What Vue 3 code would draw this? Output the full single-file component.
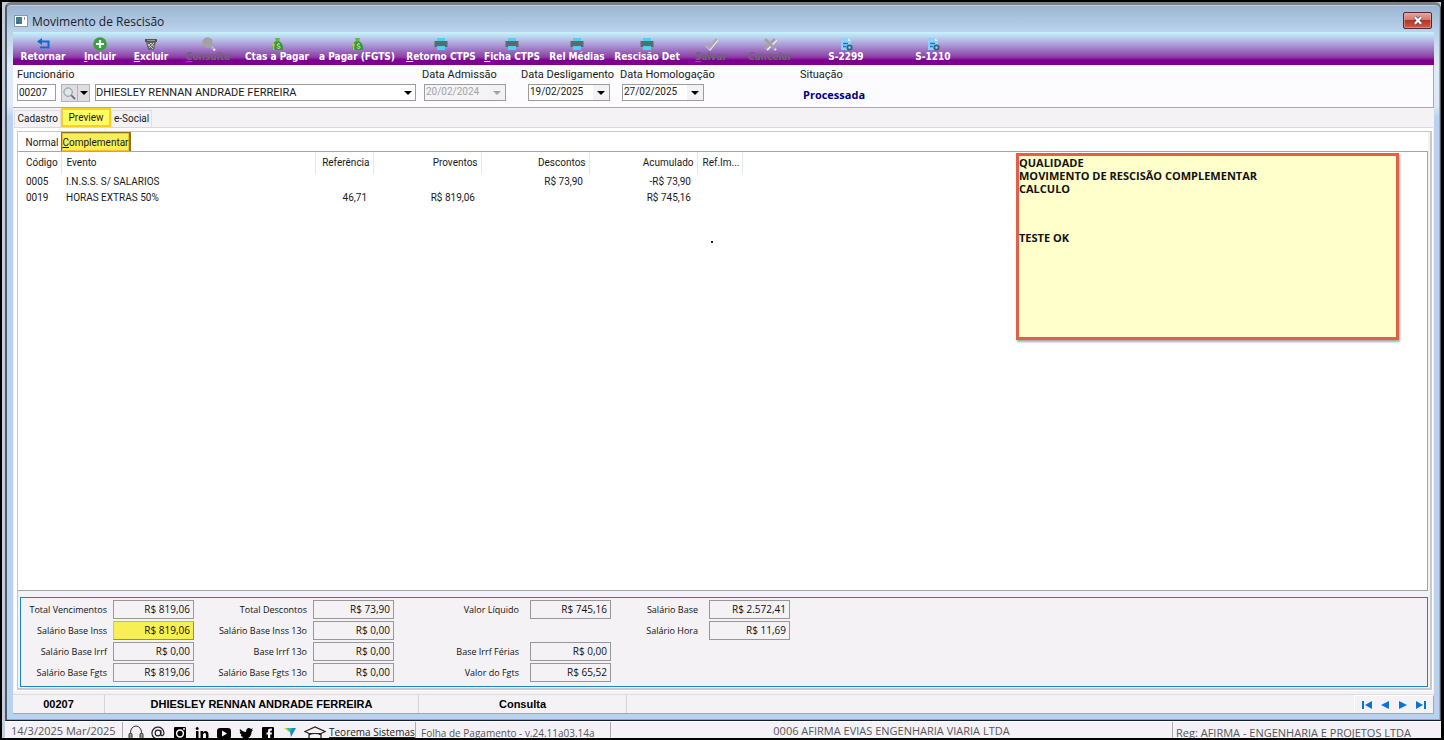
<script setup>
const tools = [
  { key: 'R', rest: 'etornar', icon: 'back', w: 'w60' },
  { key: 'I', rest: 'ncluir', icon: 'add', w: 'w54', u: true },
  { key: 'E', rest: 'xcluir', icon: 'trash', w: 'w48', u: true },
  { key: 'C', rest: 'onsulta', icon: 'search', w: 'w66', u: true, disabled: true },
  { key: 'C', rest: 'tas a Pagar', icon: 'money', w: 'w72' },
  { key: 'a', rest: ' Pagar (FGTS)', icon: 'money', w: 'w88' },
  { key: 'R', rest: 'etorno CTPS', icon: 'print', w: 'w80', u: true },
  { key: 'F', rest: 'icha CTPS', icon: 'print', w: 'w62', u: true },
  { key: 'R', rest: 'el Médias', icon: 'print', w: 'w68' },
  { key: 'R', rest: 'escisão Det', icon: 'print', w: 'w72' },
  { key: 'S', rest: 'alvar', icon: 'check', w: 'w56', u: true, disabled: true },
  { key: 'C', rest: 'ancelar', icon: 'cross', w: 'w62', disabled: true },
  { key: 'S', rest: '-2299', icon: 'doc', w: 'w90' },
  { key: 'S', rest: '-1210', icon: 'doc', w: 'w84' },
]

const rows = [
  { cod: '0005', evento: 'I.N.S.S. S/ SALARIOS', ref: '', prov: '', desc: 'R$ 73,90', acum: '-R$ 73,90' },
  { cod: '0019', evento: 'HORAS EXTRAS 50%', ref: '46,71', prov: 'R$ 819,06', desc: '', acum: 'R$ 745,16' },
]

const groups = [
  {
    cls: 'g1',
    items: [
      { id: 'tv', label: 'Total Vencimentos', value: 'R$ 819,06' },
      { id: 'sbi', label: 'Salário Base Inss', value: 'R$ 819,06', mark: true },
      { id: 'sbr', label: 'Salário Base Irrf', value: 'R$ 0,00' },
      { id: 'sbf', label: 'Salário Base Fgts', value: 'R$ 819,06' },
    ],
  },
  {
    cls: 'g2',
    items: [
      { id: 'td', label: 'Total Descontos', value: 'R$ 73,90' },
      { id: 'sbi13', label: 'Salário Base Inss 13o', value: 'R$ 0,00' },
      { id: 'bi13', label: 'Base Irrf 13o', value: 'R$ 0,00' },
      { id: 'sbf13', label: 'Salário Base Fgts 13o', value: 'R$ 0,00' },
    ],
  },
  {
    cls: 'g3',
    items: [
      { id: 'vl', label: 'Valor Líquido', value: 'R$ 745,16' },
      { id: 'blank' },
      { id: 'bif', label: 'Base Irrf Férias', value: 'R$ 0,00' },
      { id: 'vf', label: 'Valor do Fgts', value: 'R$ 65,52' },
    ],
  },
  {
    cls: 'g4',
    items: [
      { id: 'sb', label: 'Salário Base', value: 'R$ 2.572,41' },
      { id: 'sh', label: 'Salário Hora', value: 'R$ 11,69' },
    ],
  },
]
</script>

<template>
  <div class="desktop">
    <section class="window">
      <header class="title">
        <svg class="appicon" viewBox="0 0 14 12"><rect x=".5" y=".5" width="13" height="11" fill="#fff" stroke="#8a97a8" /><rect x="2" y="2" width="6" height="7" fill="#3d7f8f" /><path d="M2 9h3V5z" fill="#3b62b0" /><path d="M10.500 2v3" stroke="#99a" /></svg>
        <h1>Movimento de Rescisão</h1>
        <button class="close" aria-label="Fechar">
          <svg viewBox="0 0 12 10"><path d="M2.500 1.500 9.500 8.500M9.500 1.500 2.500 8.500" stroke="#4a4f66" stroke-width="4" /><path d="M2.500 1.500 9.500 8.500M9.500 1.500 2.500 8.500" stroke="#fff" stroke-width="2.400" /></svg>
        </button>
      </header>

      <div class="client">
        <nav class="toolbar">
          <button v-for="t in tools" :key="t.key + t.rest" :class="t.w" :disabled="t.disabled">
            <svg viewBox="0 0 16 14">
              <g v-if="t.icon === 'back'" fill="none" stroke="#1268c8" stroke-width="2"><path d="M5 4.500h8.500v6H5" /><path d="M7 1v7L2 4.500z" fill="#1268c8" stroke="none" /><path d="M5 12h7" stroke="#4b9be8" stroke-width="1" /></g>
              <g v-else-if="t.icon === 'add'"><circle cx="8" cy="7" r="6.800" fill="#35a23a" /><path d="M8 3v8M4 7h8" stroke="#fff" stroke-width="2.200" /></g>
              <g v-else-if="t.icon === 'trash'"><path d="M2 2h12v3H2z" fill="#555" /><path d="M3 5h10l-2 8H5z" fill="#666" /><path d="M4 3.500h8" stroke="#aaa" stroke-width=".8" /><path d="M5 7l5 5M8 6l3 4M11 6l-5 5M8 6 5 9" stroke="#ddd" stroke-width=".8" /></g>
              <g v-else-if="t.icon === 'search'"><path d="m11 9.500 4 4" stroke="#f2eef6" stroke-width="2" /><circle cx="7.500" cy="5.500" r="5.300" fill="#a2a2a6" /><path d="m10 9 3 3.500" stroke="#a2a2a6" stroke-width="2.400" /></g>
              <g v-else-if="t.icon === 'money'"><path d="M7 4h3c3 1.500 4.500 5 4 9H3.500C3 9 4 5.500 7 4z" fill="#37983a" /><path d="M6 1h5l-1 3.500H7z" fill="#67b83f" /><path d="M11 7.500C9.500 6 7.500 7 8.500 8.500s3 .5 2.500 2-2.500 1-3 0" fill="none" stroke="#e4f3c4" /><path d="M4.500 6v7M3 8h3" stroke="#c9c43a" stroke-width="1.400" /></g>
              <g v-else-if="t.icon === 'print'"><path d="M4 1h8v4H4z" fill="#46d4f5" /><path d="M1.500 4h13v6h-13z" fill="#5d6874" /><path d="M4 9h8v4H4z" fill="#46d4f5" /></g>
              <g v-else-if="t.icon === 'check'" fill="none"><path d="m3 8.500 4 4 7.500-9.500" stroke="#f2eef6" stroke-width="2" /><path d="m2 7 4.500 4L13.500 2" stroke="#a9a9ad" stroke-width="2.600" /></g>
              <g v-else-if="t.icon === 'cross'" fill="none"><path d="m4 3 10 10M14.500 3 5 13" stroke="#f2eef6" stroke-width="2" /><path d="m3 2 10 10M13 2 3 12" stroke="#a2a2a6" stroke-width="3" /></g>
              <g v-else><path d="M3 1h7l3 3v9H3z" fill="#8fd0f8" /><path d="M10 1v3h3z" fill="#d9f1ff" /><path d="M5 6.500h5M5 9.500h3" stroke="#1673cf" stroke-width="1.600" /><circle cx="11.500" cy="10.500" r="2.200" fill="none" stroke="#35607c" stroke-width="1.800" /></g>
            </svg>
            <span><u v-if="t.u">{{ t.key }}</u><template v-else>{{ t.key }}</template>{{ t.rest }}</span>
          </button>
        </nav>

        <form class="filters" @submit.prevent>
          <div class="field func">
            <label for="cod">Funcionário</label>
            <div class="line">
              <input id="cod" class="cod" value="00207" />
              <span class="split">
                <button class="lens" aria-label="Pesquisar"><svg viewBox="0 0 14 14" fill="none"><circle cx="5.500" cy="5.500" r="4.500" fill="#dbe9e8" stroke="#80898c" /><path d="m9 9 4 4" stroke="#666" stroke-width="1.800" /></svg></button>
                <button class="drop" aria-label="Opções"><i class="arrow"></i></button>
              </span>
              <span class="combo">
                <select aria-label="Nome do funcionário"><option>DHIESLEY RENNAN ANDRADE FERREIRA</option></select>
                <i class="arrow"></i>
              </span>
            </div>
          </div>
          <div class="field date">
            <label for="adm">Data Admissão</label>
            <span class="picker off"><input id="adm" value="20/02/2024" disabled /><button disabled aria-label="Abrir calendário"><i class="arrow"></i></button></span>
          </div>
          <div class="field date mid">
            <label for="des">Data Desligamento</label>
            <span class="picker"><input id="des" value="19/02/2025" /><button aria-label="Abrir calendário"><i class="arrow"></i></button></span>
          </div>
          <div class="field date last">
            <label for="hom">Data Homologação</label>
            <span class="picker"><input id="hom" value="27/02/2025" /><button aria-label="Abrir calendário"><i class="arrow"></i></button></span>
          </div>
          <div class="field">
            <span class="caption">Situação</span>
            <strong class="state">Processada</strong>
          </div>
        </form>

        <div class="tabs">
          <button class="tab">Cadastro</button>
          <button class="tab current">Preview</button>
          <button class="tab">e-Social</button>
        </div>

        <main class="page">
          <div class="inner">
            <div class="subtabs">
              <button class="sub">Normal</button>
              <button class="sub current"><u>C</u>omplementar</button>
            </div>
            <div class="list">
              <table>
                <colgroup><col class="c1" /><col class="c2" /><col class="c3" /><col class="c4" /><col class="c4" /><col class="c4" /><col class="c5" /></colgroup>
                <thead>
                  <tr><th>Código</th><th>Evento</th><th class="num">Referência</th><th class="num">Proventos</th><th class="num">Descontos</th><th class="num">Acumulado</th><th>Ref.Im...</th></tr>
                </thead>
                <tbody>
                  <tr v-for="r in rows" :key="r.cod">
                    <td>{{ r.cod }}</td><td>{{ r.evento }}</td><td class="num">{{ r.ref }}</td><td class="num">{{ r.prov }}</td><td class="num">{{ r.desc }}</td><td class="num">{{ r.acum }}</td><td></td>
                  </tr>
                </tbody>
              </table>
              <i class="speck"></i>
              <aside class="note">
                <p>QUALIDADE<br />MOVIMENTO DE RESCISÃO COMPLEMENTAR<br />CALCULO</p>
                <p>TESTE OK</p>
              </aside>
            </div>
            <div class="totals">
              <div v-for="g in groups" :key="g.cls" class="group" :class="g.cls">
                <template v-for="f in g.items" :key="f.id">
                  <template v-if="f.label">
                    <label :for="f.id">{{ f.label }}</label>
                    <input :id="f.id" :value="f.value" :class="{ mark: f.mark }" readonly />
                  </template>
                  <template v-else><span></span><span></span></template>
                </template>
              </div>
            </div>
          </div>
        </main>

        <footer class="status">
          <span class="s1">00207</span>
          <span class="s2">DHIESLEY RENNAN ANDRADE FERREIRA</span>
          <span class="s3">Consulta</span>
          <div class="nav">
            <button aria-label="Primeiro"><svg viewBox="0 0 12 10"><path d="M1 1h2v8H1zM11 1v8L4 5z" /></svg></button>
            <button aria-label="Anterior"><svg viewBox="0 0 12 10"><path d="M10 1v8L2 5z" /></svg></button>
            <button aria-label="Próximo"><svg viewBox="0 0 12 10"><path d="M2 1v8l8-4z" /></svg></button>
            <button aria-label="Último"><svg viewBox="0 0 12 10"><path d="M9 1h2v8H9zM1 1v8l7-4z" /></svg></button>
          </div>
        </footer>
      </div>
    </section>

    <footer class="appbar">
      <span class="today">14/3/2025 Mar/2025</span>
      <div class="links">
        <a href="#" aria-label="Suporte"><svg viewBox="0 0 16 16" fill="none" stroke="#333"><path d="M2.500 11V7.500a5.500 6.500 0 0 1 11 0V11" /><rect x="1" y="8" width="3" height="6" rx="1.500" fill="#999" /><rect x="12" y="8" width="3" height="6" rx="1.500" fill="#999" /></svg></a>
        <a href="#" aria-label="E-mail"><svg viewBox="0 0 16 16" fill="none" stroke="#222" stroke-width="1.200"><circle cx="8" cy="8" r="2.800" /><path d="M10.800 5v4.500c0 2 3.200 1.500 3.200-1.500a6 6 0 1 0-3 5.300" /></svg></a>
        <a href="#" aria-label="Instagram"><svg viewBox="0 0 16 16"><rect x="2" y="2" width="12" height="12" rx="1" /><circle cx="8" cy="8.500" r="3.400" fill="none" stroke="#fff" stroke-width="1.500" /><circle cx="12" cy="4" r="1" fill="#fff" /></svg></a>
        <a href="#" aria-label="LinkedIn"><svg viewBox="0 0 16 16"><path d="M2 6h2.500v9H2zM6.500 6H9v1.200c2-2.300 5.500-1.200 5.500 2V15H12v-5c0-3-3-2.500-3 0v5H6.500z" /><circle cx="3.200" cy="3.500" r="1.500" /></svg></a>
        <a href="#" aria-label="YouTube"><svg viewBox="0 0 16 16"><rect x="1" y="3" width="14" height="11" rx="3" /><path d="m6 5.500 5 3-5 3z" fill="#fff" /></svg></a>
        <a href="#" aria-label="Twitter"><svg viewBox="0 0 16 16"><path d="M2 4c2 2 4 3 6 3 0-4 3-5 5-3l2-.7-1.200 2 1.200-.3-1.400 1.700C13.500 13 7 16 1.500 13.300c2 0 3-.4 4-1.200C4 12 3 11 2.800 10h1.400C2.500 9.500 1.800 8 1.800 6.800l1.300.4C1.700 6 1.500 5 2 4z" /></svg></a>
        <a href="#" aria-label="Facebook"><svg viewBox="0 0 16 16"><rect x="2" y="2" width="12" height="12" rx="1" /><path d="M8 15V9.500H6.500V7.500H8V6c0-2 1.500-2.700 4-2.300v1.800c-1.300 0-1.800 0-1.800 1v1H12l-.3 2h-1.500V15z" fill="#fff" /></svg></a>
        <a href="#" aria-label="Teorema"><svg viewBox="0 0 16 16"><path d="M2 3h8l-3 4z" fill="#b5dc2c" /><path d="M5 3h9L9 12 8 7z" fill="#1e86d8" /><path d="M5 3h5L8 7z" fill="#2bc4a0" /></svg></a>
        <a href="#" class="cap" aria-label="Treinamento"><svg viewBox="0 0 22 16" fill="none" stroke="#222" stroke-width="1.200"><path d="M1 6.500 11 2l10 4.500-4 2H5zM5 8.500V13c3 2 9 2 12 0V8.500M5 10c3-2 9-2 12 0" /></svg></a>
        <a href="#" class="site">Teorema Sistemas</a>
      </div>
      <span class="version">Folha de Pagamento - v.24.11a03.14a</span>
      <span class="company">0006 AFIRMA EVIAS ENGENHARIA VIARIA LTDA</span>
      <span class="reg">Reg: AFIRMA - ENGENHARIA E PROJETOS LTDA</span>
    </footer>
  </div>
</template>

<style>
body { margin: 0; background: #000; }
</style>

<style scoped>
* { box-sizing: border-box; }
button, input, select { font: inherit; color: inherit; margin: 0; padding: 0; border: 0; border-radius: 0; background: none; }
svg { display: block; }
.desktop {
  display: flex; flex-direction: column; height: 100vh; min-height: 480px;
  border: solid #000; border-width: 2px 3px 2px 2px; background: #c3cddb; padding-left: 3px;
  font: 10px/12px Roboto, "Liberation Sans", sans-serif; color: #1a1a1a;
}
.window {
  flex: 1; min-height: 0; display: flex; flex-direction: column;
  border: solid #4f5a67; border-width: 3px 1px 1px 2px; border-top-color: #7c7f85; border-bottom-color: #10202a; border-radius: 6px 6px 0 0;
  padding: 0 6px 6px; background: linear-gradient(#9ab4d2, #bad2ea 26px, #e0ebf8 60px, #dde9f7 100px, #bad2f0 112px);
  box-shadow: inset 0 -1px #4dc4dc, inset -1px 0 #6cc3d8, inset 0 1px #c3cfde;
}
.title { display: flex; align-items: center; height: 27px; padding: 7px 2px 0 1px; }
.appicon { width: 14px; height: 12px; margin-bottom: 3px; }
h1 { flex: 1; margin: 0 0 0 4px; font: 12px/16px "Open Sans", "Noto Sans", sans-serif; color: #1b222c; }
.close {
  width: 29px; height: 17px; margin-bottom: 4px; border: 1px solid #5b2434; border-radius: 2px; display: grid; place-items: center;
  background: linear-gradient(#e3a79f, #d2796e 45%, #b93024 50%, #cf5e47); box-shadow: inset 0 0 0 1px #e9b3aa80;
}
.close svg { width: 12px; height: 9px; }
.client { flex: 1; min-height: 0; display: flex; flex-direction: column; background: #f4f2f5; }

.toolbar {
  display: flex; height: 33px; flex: none; font: bold 10px/12px "DejaVu Sans Condensed", "Open Sans", sans-serif; color: #fff;
  background: linear-gradient(#c5f4fc, #bcd4ee 5px, #b0a8dc 11px, #a07cc6 17px, #8d3ea6 25px, #7e008f 28px, #7e008f);
}
.toolbar button { display: flex; flex-direction: column; align-items: center; padding-top: 5px; white-space: nowrap; }
.toolbar button:disabled { color: #6e6672; }
.toolbar svg { width: 16px; height: 14px; }
.w48 { width: 48px; } .w54 { width: 54px; } .w56 { width: 56px; } .w60 { width: 60px; } .w62 { width: 62px; }
.w66 { width: 66px; } .w68 { width: 68px; } .w72 { width: 72px; } .w80 { width: 80px; } .w84 { width: 84px; }
.w88 { width: 88px; } .w90 { width: 90px; }

.filters { display: flex; height: 43px; flex: none; padding: 3px 4px 0; background: #fcfbfe; border: solid #a9a9ad; border-width: 0 1px 1px 0; }
.field { display: flex; flex-direction: column; align-items: flex-start; }
.field label, .caption { font-size: 11px; line-height: 13px; white-space: nowrap; }
.func { width: 405px; }
.line { display: flex; margin-top: 3px; }
.cod { width: 39px; height: 17px; border: 1px solid #9c9ca0; background: #fff; padding-left: 1px; }
.split { display: flex; margin: 0 5px; height: 18px; border: 1px solid #b4b4b8; background: #dedde1; }
.lens { width: 16px; border-right: 1px solid #b4b4b8; display: grid; place-items: center; }
.lens svg { width: 13px; height: 13px; }
.drop { width: 11px; display: grid; place-items: center; }
.arrow { width: 0; height: 0; border: solid transparent; border-width: 4px 4px 0; border-top-color: #000; }
.combo { position: relative; width: 321px; height: 17px; }
.combo select { appearance: none; width: 100%; height: 17px; border: 1px solid #9c9ca0; background: #fff; font-size: 11px; line-height: 13px; padding-bottom: 1px; }
.combo .arrow { position: absolute; right: 4px; top: 7px; pointer-events: none; }
.date { width: 99px; }
.mid .picker { margin-left: 7px; }
.last { width: 180px; }
.picker { display: flex; margin: 3px 0 0 2px; width: 82px; height: 17px; border: 1px solid #9c9ca0; background: #fff; }
.picker input { width: 64px; padding: 0 0 1px 1px; }
.picker button { flex: 1; background: #f2f1f4; display: grid; place-items: center; }
.off { color: #a3a3a7; background: #f4f3f6; }
.off .arrow { border-top-color: #a3a3a7; }
.state { margin: 7px 0 0 3px; font: bold 11px/14px "Open Sans", "Noto Sans", sans-serif; color: #00007e; }

.tabs { display: flex; height: 19px; flex: none; padding-left: 1px; }
.tab { height: 17px; margin-top: 2px; padding: 0 2px; border: solid #e2e0e4; border-width: 1px 1px 0; }
.tab:first-child { width: 47px; padding: 0; text-align: right; padding-right: 2px; }
.tab.current { width: 50px; height: 19px; margin: 0; background: #ffff62; border: 2px solid #f8cf24; padding: 0; text-align: center; }

.page {
  flex: 1; min-height: 0; display: flex; flex-direction: column; margin: 0 1px 3px 1px; padding: 3px 1px 1px 3px;
  background: #fff; border-top: 1px solid #d9d8dc;
}
.inner {
  flex: 1; min-height: 0; display: flex; flex-direction: column; padding: 0 2px 1px 0; background: #f4f2f5;
  border: solid #c9c9cd; border-width: 1px 2px 2px 1px;
}
.subtabs { display: flex; height: 19px; flex: none; padding-left: 3px; background: #fff; }
.sub { width: 40px; height: 19px; padding: 3px 0 0 2px; }
.sub.current { width: 70px; padding: 2px 0 0; background: #f8ef55; border: solid #8a7418; border-width: 1px 2px 0 1px; box-shadow: inset 0 0 0 1px #f2c422; }
.list { position: relative; flex: 1; min-height: 0; background: #fff; border: solid #a4a4b0; border-width: 1px 1px 1px 0; }
table { width: 724px; border-collapse: collapse; table-layout: fixed; }
.c1 { width: 43px; } .c2 { width: 254px; } .c3 { width: 58px; } .c4 { width: 108px; } .c5 { width: 45px; }
th, td { height: 16px; padding: 0 6px 0 5px; font-weight: normal; text-align: left; white-space: nowrap; overflow: hidden; }
th { height: 22px; padding-right: 3px; border-right: 1px solid #e6e6ea; }
td:first-child, th:first-child { padding-left: 8px; padding-right: 0; }
.num { text-align: right; }
.speck { position: absolute; left: 693px; top: 89px; width: 2px; height: 2px; background: #222; }
.note {
  position: absolute; right: 28px; top: 1px; width: 383px; height: 187px; border: 3px solid #df604b;
  background: #ffffcc; box-shadow: 1px 2px 2px #0005; font: bold 11px/13px "Open Sans", "Noto Sans", sans-serif; color: #111;
}
.note p { margin: 0 0 36px; }

.totals { display: flex; gap: 6px; flex: none; margin: 6px 0 0 2px; padding: 2px 0 4px; border: 1px solid #1b84cf; }
.group { display: grid; grid-auto-rows: 19px; row-gap: 2px; column-gap: 6px; align-items: center; }
.group label { text-align: right; font: 9px/12px "Open Sans", "Noto Sans", sans-serif; color: #111; white-space: nowrap; }
.group input { height: 19px; width: 81px; border: 1px solid #98989c; background: #f4f2f5; text-align: right; padding: 0 3px 2px; font: 10px/12px "Open Sans", "Noto Sans", sans-serif; color: #111; }
.group input.mark { background: #f8ef55; border-color: #e0b52a #8f8f60 #8f8f60 #f2c422; }
.g1 { grid-template-columns: 86px 81px; }
.g2 { grid-template-columns: 107px 81px; }
.g3 { grid-template-columns: 124px 81px; }
.g4 { grid-template-columns: 86px 81px; align-content: start; }
.g3 label, .g4 label { padding-right: 5px; }

.status { display: flex; height: 20px; flex: none; border-bottom: 1px solid #a6a6aa; border-top: 1px solid #dddce0; font: bold 11px/18px "Liberation Sans", Arial, sans-serif; color: #000; }
.status span { text-align: center; border-right: 1px solid #d6d5d9; }
.s1 { width: 92px; } .s2 { width: 314px; } .s3 { width: 208px; }
.nav { display: flex; gap: 6px; margin-left: auto; padding: 0 6px; border: solid #fff; border-width: 1px 0 0 1px; border-right: 1px solid #a6a6aa; }
.nav button { width: 12px; display: grid; place-items: center; }
.nav svg { width: 12px; height: 10px; fill: #0a72d8; }

.appbar { display: flex; flex: none; height: 17px; overflow: hidden; background: #f4f2f6; border-top: 1px solid #fff; font: 10px/14px "Open Sans", "Noto Sans", sans-serif; color: #55555c; white-space: nowrap; }
.today { width: 118px; padding: 2px 0 0 6px; font-size: 11px; border-right: 1px solid #aaaaae; }
.links { display: flex; width: 293px; padding-left: 2px; border-right: 1px solid #aaaaae; }
.links a { width: 22px; flex: none; padding-top: 3px; color: #222; }
.links svg { width: 16px; height: 16px; margin: 0 auto; }
.links .cap { width: 28px; }
.links .cap svg { width: 22px; }
.links .site { width: 84px; }
.version { width: 195px; padding: 4px 0 0 5px; border-right: 1px solid #aaaaae; }
.company { flex: 1; text-align: center; font-size: 11px; padding-top: 2px; }
.reg { width: 269px; padding: 4px 0 0 3px; font-size: 11px; border-left: 1px solid #aaaaae; }
</style>
